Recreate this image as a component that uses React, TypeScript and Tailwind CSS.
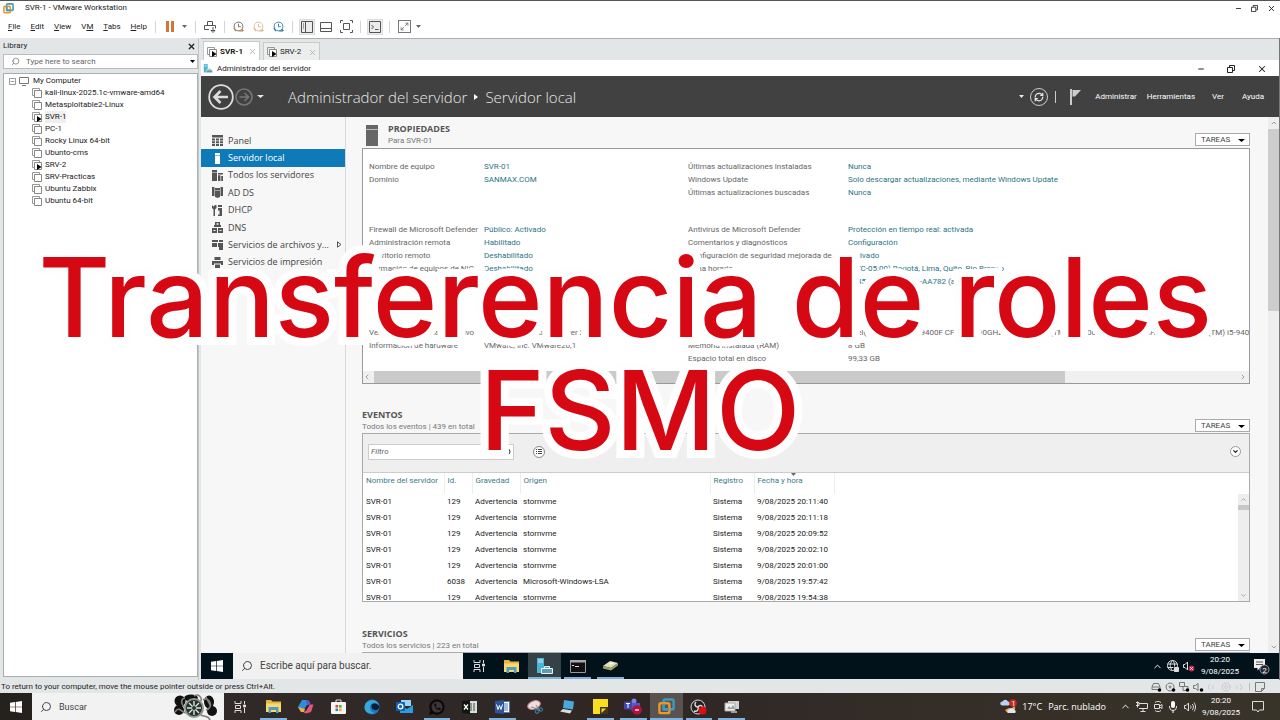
import React from "react";
import clsx from "clsx";
import { X, Minus, Search, ChevronUp, ChevronDown, ChevronLeft, ChevronRight, RefreshCw, Maximize2 } from "lucide-react";

const vms = [
  { name: "kali-linux-2025.1c-vmware-amd64" },
  { name: "Metasploitable2-Linux" },
  { name: "SVR-1", running: true, active: true },
  { name: "PC-1" },
  { name: "Rocky Linux 64-bit" },
  { name: "Ubunto-cms" },
  { name: "SRV-2", running: true },
  { name: "SRV-Practicas" },
  { name: "Ubuntu Zabbix" },
  { name: "Ubuntu 64-bit" },
];

const roles = [
  { name: "Panel", icon: "panel" },
  { name: "Servidor local", icon: "local", active: true },
  { name: "Todos los servidores", icon: "all" },
  { name: "AD DS", icon: "adds" },
  { name: "DHCP", icon: "dhcp" },
  { name: "DNS", icon: "dns" },
  { name: "Servicios de archivos y...", icon: "files", more: true },
  { name: "Servicios de impresión", icon: "print" },
];

const properties = [
  [
    ["Nombre de equipo", "SVR-01", "Últimas actualizaciones instaladas", "Nunca"],
    ["Dominio", "SANMAX.COM", "Windows Update", "Solo descargar actualizaciones, mediante Windows Update"],
    ["", "", "Últimas actualizaciones buscadas", "Nunca"],
  ],
  [
    ["Firewall de Microsoft Defender", "Público: Activado", "Antivirus de Microsoft Defender", "Protección en tiempo real: activada"],
    ["Administración remota", "Habilitado", "Comentarios y diagnósticos", "Configuración"],
    ["Escritorio remoto", "Deshabilitado", "Configuración de seguridad mejorada de", "Activado"],
    ["Formación de equipos de NIC", "Deshabilitado", "Zona horaria", "(UTC-05:00) Bogotá, Lima, Quito, Rio Branco"],
    ["", "", "", "00454-40000-00001-AA782 (activado)"],
  ],
];

const hardware = [
  [
    "Versión del sistema operativo",
    "Microsoft Windows Server 2022",
    "Procesadores",
    "Intel(R) Core(TM) i5-9400F CPU @ 2.90GHz, Intel(R) Core(TM) i5-9400F CPU @ 2.90GHz, Intel(R) Core(TM) i5-9400F",
  ],
  ["Información de hardware", "VMware, Inc. VMware20,1", "Memoria instalada (RAM)", "8 GB"],
  ["", "", "Espacio total en disco", "99,33 GB"],
];

const events = [
  ["SVR-01", "129", "Advertencia", "stornvme", "Sistema", "9/08/2025 20:11:40"],
  ["SVR-01", "129", "Advertencia", "stornvme", "Sistema", "9/08/2025 20:11:18"],
  ["SVR-01", "129", "Advertencia", "stornvme", "Sistema", "9/08/2025 20:09:52"],
  ["SVR-01", "129", "Advertencia", "stornvme", "Sistema", "9/08/2025 20:02:10"],
  ["SVR-01", "129", "Advertencia", "stornvme", "Sistema", "9/08/2025 20:01:00"],
  ["SVR-01", "6038", "Advertencia", "Microsoft-Windows-LSA", "Sistema", "9/08/2025 19:57:42"],
  ["SVR-01", "129", "Advertencia", "stornvme", "Sistema", "9/08/2025 19:54:38"],
];

export default function App() {
  return (
    <div className="relative flex h-screen flex-col overflow-hidden bg-[#e3e6e7] font-['Roboto',sans-serif] text-[8px] leading-3 text-[#222]">
      <TitleBar />
      <MenuBar />
      <div className="flex min-h-0 flex-1">
        <Library />
        <Console />
      </div>
      <StatusBar />
      <HostTaskbar />
      <Headline />
    </div>
  );
}

function Headline() {
  return (
    <h1 className="pointer-events-none absolute inset-x-0 top-[241px] text-center font-['Inter',sans-serif] text-[110px] leading-[113px] font-medium whitespace-pre text-[#d50813] [-webkit-text-stroke:16px_#fefefe] [paint-order:stroke_fill] [stroke-linejoin:round]">
      {"Transferencia de roles \nFSMO"}
    </h1>
  );
}

function TitleBar() {
  return (
    <header className="flex h-[15px] shrink-0 items-center border-t border-[#555] bg-white pr-1 pl-[3px]">
      <VmwareLogo className="size-[11px]" />
      <span className="ml-[11px] flex-1">SVR-1 - VMware Workstation</span>
      <WindowButtons gap="gap-[9px]" size={7} />
    </header>
  );
}

function WindowButtons({ gap, size }: { gap: string; size: number }) {
  return (
    <div className={clsx("flex items-center text-[#222]", gap)}>
      <button type="button" aria-label="Minimizar">
        <Minus size={size} strokeWidth={3} />
      </button>
      <button type="button" aria-label="Restaurar">
        <svg width={size} height={size} viewBox="0 0 8 8" fill="none" stroke="currentColor">
          <path d="M.5 2.500h5v5h-5zM2.500 2V.5h5v5H6" />
        </svg>
      </button>
      <button type="button" aria-label="Cerrar">
        <X size={size + 2} strokeWidth={2.500} />
      </button>
    </div>
  );
}

const Separator = () => <span className="h-3 w-px bg-[#d5d5d5]" />;

const Caret = ({ className }: { className?: string }) => (
  <svg className={clsx("h-[3px] w-[5px]", className)} viewBox="0 0 6 3" preserveAspectRatio="none" fill="currentColor">
    <path d="M0 0h6L3 3z" />
  </svg>
);

function MenuBar() {
  return (
    <nav className="flex h-[23px] shrink-0 items-center bg-white pl-2 text-[#222]">
      <div className="flex w-[147px] items-center justify-between pr-2">
        {["File", "Edit", "View"].map((m) => (
          <button key={m} type="button">
            <u>{m[0]}</u>
            {m.slice(1)}
          </button>
        ))}
        <button type="button">
          V<u>M</u>
        </button>
        {["Tabs", "Help"].map((m) => (
          <button key={m} type="button">
            <u>{m[0]}</u>
            {m.slice(1)}
          </button>
        ))}
      </div>
      <div className="flex items-center">
        <Separator />
        <button type="button" aria-label="Pause" className="ml-[10px] flex gap-[2px]">
          <span className="h-[11px] w-[3px] bg-[#cf7638]" />
          <span className="h-[11px] w-[3px] bg-[#cf7638]" />
        </button>
        <Caret className="mr-2 ml-2 text-[#666]" />
        <Separator />
        <button type="button" aria-label="Send Ctrl+Alt+Del" className="mr-2 ml-2">
          <svg width="12" height="12" viewBox="0 0 12 12" fill="none" stroke="#555">
            <path d="M3.500 4V.5h5V4M5 8.500H.5v-4h11v3M9 6v4M7 9.500h4L9 11.500z" />
          </svg>
        </button>
        <Separator />
        <div className="mr-2 ml-2 flex gap-[9px]">
          <ClockIcon color="#666" accent="#b98552" />
          <ClockIcon color="#e0b98f" accent="#e0b98f" />
          <ClockIcon color="#2c7fa0" accent="#2c7fa0" />
        </div>
        <Separator />
        <div className="mr-[7px] ml-[6px] flex items-center text-[#555]">
          <button type="button" aria-label="Library" className="border border-[#ddd] bg-[#ececec] p-px">
            <svg width="12" height="12" viewBox="0 0 12 12" fill="none" stroke="currentColor">
              <path d="M.5.5h11v11H.5zM4.500.5v11M2 3h1M2 5h1M2 7h1" />
            </svg>
          </button>
          <button type="button" aria-label="Thumbnail bar" className="mr-2 ml-[5px]">
            <svg width="12" height="12" viewBox="0 0 12 12" fill="none" stroke="currentColor">
              <path d="M.5 1.500h11v9H.5zM.5 7.500h11" />
            </svg>
          </button>
          <button type="button" aria-label="Full screen">
            <svg width="13" height="13" viewBox="0 0 13 13" fill="none" stroke="currentColor">
              <path d="M.5 3V.5H3M10 .5h2.500V3M12.500 10v2.500H10M3 12.500H.5V10M3.500 3.500h6v6h-6z" />
            </svg>
          </button>
        </div>
        <Separator />
        <button type="button" aria-label="Console" className="mr-[6px] ml-[6px] border border-[#ddd] bg-[#ececec] p-px text-[#555]">
          <svg width="12" height="12" viewBox="0 0 12 12" fill="none" stroke="currentColor">
            <path d="M.5.5h11v11H.5zM2.500 4l2 2-2 2M6 8.500h3.500" />
          </svg>
        </button>
        <Separator />
        <button type="button" aria-label="Stretch" className="ml-2 flex size-[13px] items-center justify-center border border-[#777] text-[#666]">
          <Maximize2 size={9} strokeWidth={2} />
        </button>
        <Caret className="ml-[5px] text-[#666]" />
      </div>
    </nav>
  );
}

const ClockIcon = ({ color, accent }: { color: string; accent: string }) => (
  <svg width="11" height="11" viewBox="0 0 12 12" fill="none">
    <circle cx="6" cy="6" r="4.800" stroke={color} />
    <path d="M6 3v3.200h2.500" stroke={color} />
    <path d="M1 7.500l2 3.500M7 10.800h4M9.500 9l2 1.800" stroke={accent} strokeWidth="1.300" />
  </svg>
);

function VmwareLogo({ className }: { className?: string }) {
  return (
    <svg className={className} viewBox="0 0 18 18" fill="none" strokeWidth="2.600">
      <rect x="6" y="1.500" width="10.500" height="10.500" rx="1.500" stroke="#3f9cb8" />
      <rect x="1.500" y="5.500" width="10.500" height="10.500" rx="1.500" stroke="#e8982d" />
      <path d="M6 6v6h6" stroke="#3f9cb8" />
    </svg>
  );
}

const VmIcon = ({ running }: { running?: boolean }) => (
  <svg width="10" height="10" viewBox="0 0 10 10" fill="none" className="shrink-0">
    <path d="M2.500 7.500h-2v-7h7v2" stroke="#999" />
    <path d="M2.500 2.500h7v7h-7z" fill="#fff" stroke="#888" />
    {running && <path d="M5 4v6l4.500-3z" fill="#000" />}
  </svg>
);

function Library() {
  return (
    <aside className="flex w-[199px] shrink-0 flex-col border-r border-[#c4c8c9] pl-[3px]">
      <div className="flex h-4 items-center justify-between pr-[2px]">
        <h2>Library</h2>
        <button type="button" aria-label="Close library">
          <X size={9} strokeWidth={3.500} />
        </button>
      </div>
      <label className="flex h-[15px] items-center border border-[#b9bdbf] bg-white pr-[2px] pl-[7px]">
        <Search size={9} strokeWidth={2} className="-scale-x-100 text-[#777]" />
        <input type="text" aria-label="Search" placeholder="Type here to search" className="ml-[6px] min-w-0 flex-1 outline-none placeholder:text-[#666]" />
        <Caret className="text-black" />
      </label>
      <div className="mt-1 mb-[3px] flex-1 border border-[#a9adaf] bg-white pt-px pl-[5px]">
        <div className="flex h-3 items-center">
          <svg width="7" height="7" viewBox="0 0 8 8" fill="none" stroke="#888">
            <path d="M.5.5h7v7h-7zM2 4h4" />
          </svg>
          <svg width="10" height="9" viewBox="0 0 10 9" fill="none" stroke="#777" className="mr-1 ml-[3px]">
            <path d="M.5.5h9v6h-9zM3 8.500h4" />
          </svg>
          My Computer
        </div>
        <ul className="pl-[23px]">
          {vms.map((vm) => (
            <li key={vm.name} className="flex h-3 items-center">
              <VmIcon running={vm.running} />
              <span className={clsx("ml-[3px]", vm.active && "bg-[#efefef]")}>{vm.name}</span>
            </li>
          ))}
        </ul>
      </div>
    </aside>
  );
}

function Console() {
  return (
    <section className="ml-[2px] flex min-w-0 flex-1 flex-col border-r border-[#777]">
      <div className="flex h-[22px] shrink-0 items-end gap-[3px] border-t border-[#a9adaf] pl-[2px]">
        <ConsoleTab name="SVR-1" active />
        <ConsoleTab name="SRV-2" />
      </div>
      <div className="flex h-4 shrink-0 items-center bg-white pt-px pr-[12px] pl-[2px]">
        <ServerManagerIcon className="h-[9px] w-[10px]" />
        <span className="ml-1 flex-1">Administrador del servidor</span>
        <WindowButtons gap="gap-[22px]" size={8} />
      </div>
      <ManagerHeader />
      <div className="flex min-h-0 flex-1 bg-[#f7f7f7]">
        <RoleList />
        <main className="flex min-w-0 flex-1 flex-col overflow-hidden pr-[18px] pl-4">
          <Properties />
          <Events />
          <Services />
        </main>
        <div className="flex w-[11px] shrink-0 flex-col items-center bg-[#eee] text-[#777]">
          <ChevronUp size={8} className="my-[2px]" />
          <div className="h-[182px] w-full bg-[#cdcdcd]" />
          <div className="flex-1" />
          <ChevronDown size={8} className="my-[2px]" />
        </div>
      </div>
      <GuestTaskbar />
      <div className="h-px shrink-0" />
    </section>
  );
}

function ConsoleTab({ name, active }: { name: string; active?: boolean }) {
  return (
    <div className={clsx("flex w-[57px] items-center border border-b-0 border-[#c8caca] pt-px pl-[3px]", active ? "h-[19px] bg-white font-bold" : "h-[18px] bg-[#eceded]")}>
      <VmIcon running />
      <span className="ml-[3px] flex-1">{name}</span>
      <button type="button" aria-label={`Close ${name}`} className="mr-[2px] text-[#aaa]">
        <X size={9} />
      </button>
    </div>
  );
}

const ServerManagerIcon = ({ className }: { className?: string }) => (
  <svg className={className} viewBox="0 0 17 16">
    <path d="M1 0h7v15H1z" fill="#4cb4d8" />
    <path d="M2 2h5M2 4h5" stroke="#c9ecf7" />
    <path d="M5.500 10.500h11v5h-11zM8.500 10.500v-2h5v2" fill="#5e9cb3" stroke="#e8f5fa" />
  </svg>
);

function ManagerHeader() {
  return (
    <div className="flex h-[41px] shrink-0 items-center bg-[#414141] pr-[15px] pl-[7px] text-[#e8e8e8]">
      <button type="button" aria-label="Atrás">
        <svg width="26" height="26" viewBox="0 0 26 26" fill="none" stroke="#ddd">
          <circle cx="13" cy="13" r="11.800" strokeWidth="1.800" />
          <path d="M20 13H7M12.500 7L6.500 13l6 6" strokeWidth="2.600" />
        </svg>
      </button>
      <button type="button" aria-label="Adelante">
        <svg width="20" height="20" viewBox="0 0 20 20" fill="none" stroke="#777" strokeWidth="1.600">
          <circle cx="10" cy="10" r="8" />
          <path d="M5.500 10h9M10.500 6l4 4-4 4" />
        </svg>
      </button>
      <Caret className="ml-[3px] h-1 w-[7px]" />
      <h1 className="ml-6 flex flex-1 items-center font-['Open_Sans',sans-serif] text-[15px] font-light">
        Administrador del servidor
        <svg width="4" height="6" viewBox="0 0 4 6" fill="#fff" className="mx-[7px]">
          <path d="M0 0v6l4-3z" />
        </svg>
        Servidor local
      </h1>
      <Caret />
      <button type="button" aria-label="Actualizar" className="ml-[6px] flex size-[18px] items-center justify-center rounded-full border border-[#ccc]">
        <RefreshCw size={10} strokeWidth={3} />
      </button>
      <span className="ml-[7px] h-3 w-px bg-[#ccc]" />
      <button type="button" aria-label="Notificaciones" className="ml-[14px]">
        <svg width="11" height="16" viewBox="0 0 11 16">
          <path d="M0 0h2v16H0zM2.500 1H11L5 7.500H2.500z" fill="#ccc" />
        </svg>
      </button>
      <nav className="ml-[14px] flex pt-px text-white">
        <button type="button">Administrar</button>
        <button type="button" className="ml-[10px]">Herramientas</button>
        <button type="button" className="ml-[17px]">Ver</button>
        <button type="button" className="ml-[18px]">Ayuda</button>
      </nav>
    </div>
  );
}

const roleShapes: Record<string, React.ReactNode> = {
  panel: <path d="M0 0h11v2.500H0zM0 3.500h3v2H0zM4 3.500h3v2H4zM8 3.500h3v2H8zM0 6.300h3v2H0zM4 6.300h3v2H4zM8 6.300h3v2H8zM0 9h3v2H0zM4 9h3v2H4zM8 9h3v2H8z" />,
  local: <path d="M3 0h5v2H3zM3 2.600h5V11H3z" />,
  all: <path d="M0 0h5v2H0zM0 2.600h5V11H0zM6 3h5v1.500H6zM6 5.200h2.500V11H6zM9.200 6H11v5H9.200z" />,
  adds: <path d="M0 0h2.500v9H0zM11 0H8.500v9H11zM3 1h5v2H3zM3 3.600h5V10l-2.500 1L3 10z" />,
  dhcp: <path d="M0 0l1.500 1.500L3 0h1.500v3L3 4.500V11H1.500V4.500L0 3zM6 0h4v2H6zM6 3h4v8H6V9.500h1.500v-4H6z" />,
  dns: <path d="M3 0h5v3h1v2H2V3h1zM0 6h5v5H0zM6 6h5v5H6zM4.500 1.200v1.600h2V1.200zM1.500 8v1h2V8zM7.500 8v1h2V8z" fillRule="evenodd" />,
  files: <path d="M0 1h6v2H0zM0 4h5v4H0zM7 1h4v2H7zM6 4h5v7H7V8H6z" />,
  print: <path d="M2.500 0h6v3h-6zM0 4h11v4H9V6.500H2V8H0zM3 7.500h5V11H3z" />,
};

function RoleList() {
  return (
    <div className="w-[145px] shrink-0 border-r border-[#d8d8d8] pt-[15px] font-['Open_Sans',sans-serif] text-[9px] text-[#444]">
      <ul className="flex h-[139px] flex-col">
        {roles.map((role) => (
          <li key={role.name} className="flex-1">
            <button type="button" className={clsx("flex h-full w-full items-center pl-[11px] text-left whitespace-nowrap", role.active && "bg-[#0e7ab8] text-white")}>
              <svg width="11" height="11" viewBox="0 0 11 11" fill={role.active ? "#fff" : "#555"} className="mr-[5px] shrink-0">
                {roleShapes[role.icon]}
              </svg>
              <span className="flex-1">{role.name}</span>
              {role.more && (
                <svg width="5" height="7" viewBox="0 0 5 7" fill="none" stroke="#555" className="mr-[3px]">
                  <path d="M.5.8v5.400l3.500-2.700z" />
                </svg>
              )}
            </button>
          </li>
        ))}
      </ul>
    </div>
  );
}

const Tasks = () => (
  <button type="button" className="flex h-[13px] w-[55px] items-center justify-between border border-[#aaa] bg-white pt-px pr-1 pl-[5px] text-[#444]">
    TAREAS
    <Caret className="h-1 w-[7px] text-black" />
  </button>
);

function PropertyRows({ rows, plain }: { rows: string[][]; plain?: boolean }) {
  return (
    <dl className="grid grid-cols-[115px_204px_160px_1fr] auto-rows-[13px] leading-[13px] whitespace-nowrap">
      {rows.flat().map((cell, i) =>
        i % 2 ? (
          <dd key={i} className={clsx("overflow-hidden", plain ? "text-[#666]" : "text-[#2b7485]")}>{cell}</dd>
        ) : (
          <dt key={i} className="text-[#666]">{cell}</dt>
        ),
      )}
    </dl>
  );
}

function Properties() {
  return (
    <section className="shrink-0">
      <div className="flex h-[31px] items-end pb-[2px]">
        <svg width="12" height="21" viewBox="0 0 12 21" className="mr-[10px] ml-1">
          <path d="M0 0h12v21H0z" fill="#666" />
          <path d="M0 4.500h12" stroke="#bbb" />
        </svg>
        <div className="flex-1">
          <h2 className="font-['Open_Sans',sans-serif] text-[9px] leading-3 font-bold text-[#555]">PROPIEDADES</h2>
          <p className="leading-[11px] text-[#777]">Para SVR-01</p>
        </div>
        <Tasks />
      </div>
      <div className="flex h-[236px] flex-col border border-[#999] bg-white">
        <div className="flex flex-1 flex-col pt-[11px] pl-[6px]">
          <PropertyRows rows={properties[0]} />
          <div className="h-6" />
          <PropertyRows rows={properties[1]} />
          <div className="h-[38px]" />
          <PropertyRows rows={hardware} plain />
        </div>
        <div className="flex h-3 items-center bg-[#f0f0f0] text-[#777]">
          <ChevronLeft size={8} className="mr-[3px]" />
          <div className="h-full w-[78%] bg-[#cacaca]" />
          <ChevronRight size={8} className="mr-[2px] ml-auto" />
        </div>
      </div>
    </section>
  );
}

function Events() {
  return (
    <section className="mt-6 shrink-0">
      <SectionTitle title="EVENTOS" detail="Todos los eventos | 439 en total" />
      <div className="flex h-[169px] flex-col overflow-hidden border border-[#aaa] bg-white">
        <div className="flex h-[39px] shrink-0 items-center border-b border-[#ccc] bg-[#efefef] pr-2 pb-[3px] pl-[5px]">
          <label className="flex h-4 w-[146px] items-center border border-[#ccc] bg-white pr-[2px] pl-[2px]">
            <input type="text" aria-label="Filtro" placeholder="Filtro" className="min-w-0 flex-1 outline-none placeholder:text-[#666] placeholder:italic" />
            <Search size={8} strokeWidth={3} className="-scale-x-100" />
          </label>
          <button type="button" aria-label="Vista" className="ml-[19px] flex size-[12px] items-center justify-center rounded-full border border-[#888] bg-white">
            <svg width="6" height="6" viewBox="0 0 6 6" stroke="#444">
              <path d="M0 .5h1M2 .5h4M0 2.500h1M2 2.500h4M0 4.500h1M2 4.500h4" />
            </svg>
          </button>
          <button type="button" aria-label="Expandir" className="ml-auto flex size-[11px] items-center justify-center rounded-full border border-[#999] bg-white">
            <ChevronDown size={7} strokeWidth={4} />
          </button>
        </div>
        <div className="flex min-h-0 flex-1">
          <table className="w-[471px] table-fixed self-start text-left whitespace-nowrap">
            <colgroup>
              <col className="w-[81px]" />
              <col className="w-[28px]" />
              <col className="w-[48px]" />
              <col className="w-[190px]" />
              <col className="w-[44px]" />
              <col className="w-[80px]" />
            </colgroup>
            <thead className="text-[#3b7c88]">
              <tr className="h-[21px] align-top">
                {["Nombre del servidor", "Id.", "Gravedad", "Origen", "Registro", "Fecha y hora"].map((h) => (
                  <th key={h} className="relative border-r border-[#eee] pt-[2px] pl-[3px] font-normal">
                    {h}
                    {h === "Fecha y hora" && <Caret className="absolute top-0 left-9 text-[#666]" />}
                  </th>
                ))}
              </tr>
            </thead>
            <tbody>
              {events.map((row) => (
                <tr key={row[5]} className="h-4">
                  {row.map((cell, i) => (
                    <td key={i} className="pl-[3px]">{cell}</td>
                  ))}
                </tr>
              ))}
            </tbody>
          </table>
          <div className="mt-[21px] ml-auto flex w-[11px] flex-col items-center bg-[#eee] text-[#777]">
            <ChevronUp size={7} className="my-[2px]" />
            <div className="h-[5px] w-full bg-[#c8c8c8]" />
            <div className="flex-1" />
            <ChevronDown size={7} className="my-[2px]" />
          </div>
        </div>
      </div>
    </section>
  );
}

const SectionTitle = ({ title, detail }: { title: string; detail: string }) => (
  <div className="flex h-[25px] items-end justify-between">
    <div>
      <h2 className="font-['Open_Sans',sans-serif] text-[9px] leading-3 font-bold text-[#555]">{title}</h2>
      <p className="text-[#777]">{detail}</p>
    </div>
    <div className="pb-px">
      <Tasks />
    </div>
  </div>
);

function Services() {
  return (
    <section className="mt-[25px] shrink-0">
      <SectionTitle title="SERVICIOS" detail="Todos los servicios | 223 en total" />
      <div className="h-5 border border-[#aaa] bg-[#efefef]" />
    </section>
  );
}

const WindowsLogo = () => (
  <svg width="12" height="12" viewBox="0 0 12 12" fill="#fff">
    <path d="M0 1.700l5-.7v4.700H0zM5.700.9L12 0v5.700H5.700zM0 6.300h5V11l-5-.7zM5.700 6.300H12V12l-6.300-.9z" />
  </svg>
);

const TaskViewIcon = () => (
  <svg width="12" height="12" viewBox="0 0 12 12" fill="none" stroke="#ddd">
    <path d="M1 0v2.500h6V0M1 12V9.500h6V12M1.500 4.500h5v3h-5zM10.500 0v3M10.500 7v5" />
    <path d="M9.500 4h2v2h-2z" fill="#ddd" />
  </svg>
);

const FolderIcon = () => (
  <svg width="15" height="13" viewBox="0 0 15 13">
    <path d="M0 0h5l1.500 1.500H15V12H0z" fill="#e5b53d" />
    <path d="M0 3.500h15V12H0z" fill="#f8d775" />
    <path d="M2.500 7h10v6H10v-3H5v3H2.500z" fill="#4c9fbd" />
  </svg>
);

type TaskProps = { label: string; open?: boolean; active?: boolean; width?: string; children: React.ReactNode };

const Task = ({ label, open, active, width = "w-[33px]", children }: TaskProps) => (
  <button type="button" aria-label={label} className={clsx("relative flex h-full items-center justify-center", width, active && "bg-white/20")}>
    {children}
    {open && <span className={clsx("absolute bottom-0 h-[2px] bg-[#7fb2dc]", active ? "inset-x-0" : "inset-x-[3px]")} />}
  </button>
);

function Clock() {
  return (
    <time className="w-10 text-center leading-3 text-white">
      20:20
      <br />
      9/08/2025
    </time>
  );
}

function GuestTaskbar() {
  return (
    <div className="flex h-[26px] shrink-0 items-center bg-[#02121a] text-white">
      <button type="button" aria-label="Inicio" className="flex w-8 justify-center">
        <WindowsLogo />
      </button>
      <label className="flex h-full w-[230px] items-center bg-[#f1f1f1] pl-2">
        <Search size={12} strokeWidth={2} className="-scale-x-100 text-[#444]" />
        <input type="text" aria-label="Buscar en el equipo" placeholder="Escribe aquí para buscar." className="ml-[7px] min-w-0 flex-1 text-[10px] outline-none placeholder:text-[#444]" />
      </label>
      <Task label="Vista de tareas" width="w-8">
        <TaskViewIcon />
      </Task>
      <Task label="Explorador">
        <FolderIcon />
      </Task>
      <Task label="Administrador del servidor" open active>
        <ServerManagerIcon className="h-4 w-[17px]" />
      </Task>
      <Task label="Símbolo del sistema" open>
        <svg width="16" height="13" viewBox="0 0 16 13">
          <path d="M.5.5h15v12H.5z" fill="#111" stroke="#999" />
          <path d="M0 0h16v2.500H0z" fill="#aaa" />
          <path d="M2 5.500h2M5 6.500h4" stroke="#ddd" />
        </svg>
      </Task>
      <Task label="Disco" open>
        <svg width="17" height="12" viewBox="0 0 17 12">
          <path d="M1 6L8 1l8 2-7 5z" fill="#dfe0b8" />
          <path d="M1 6l8 2 7-5v2.500l-7 5-8-2z" fill="#9b9d72" />
          <path d="M7 4l3-1.500 2 .5-3 1.500z" fill="#fff" />
        </svg>
      </Task>
      <div className="ml-auto flex items-center pr-[9px]">
        <ChevronUp size={11} />
        <svg width="12" height="12" viewBox="0 0 12 12" fill="none" stroke="#ddd" className="ml-1">
          <circle cx="5.500" cy="5.500" r="5" />
          <path d="M.5 4h10M.5 7.500h6M5.500.5c-3 3-3 7 0 10M5.500.5c2 2 2.500 4 2 6" />
          <path d="M7.500 7.500h4v4h-4z" fill="#ddd" />
        </svg>
        <svg width="12" height="11" viewBox="0 0 12 11" className="mr-[5px] ml-1">
          <path d="M.5 3.500H2L4.500 1v8L2 6.500H.5z" fill="none" stroke="#ddd" />
          <circle cx="8.500" cy="7.500" r="3" fill="#c2274b" />
          <path d="M7.300 6.300l2.400 2.400M9.700 6.300L7.300 8.700" stroke="#fff" />
        </svg>
        <Clock />
        <svg width="17" height="17" viewBox="0 0 17 17" className="ml-[13px]">
          <path d="M1 1h11v9H7l-2.500 2.500V10H1z" fill="#eee" />
          <path d="M3 4h7M3 6.500h7" stroke="#555" />
          <circle cx="11.500" cy="11.500" r="4.500" fill="#223" stroke="#999" />
          <text x="9.300" y="14.500" fontSize="8" fill="#fff">2</text>
        </svg>
      </div>
    </div>
  );
}

const Dot = () => <circle cx="8.500" cy="8" r="1.800" fill="#000" stroke="none" />;

function StatusBar() {
  return (
    <footer className="flex h-[13px] shrink-0 items-center justify-between pt-px pr-[15px] pl-px">
      <p>To return to your computer, move the mouse pointer outside or press Ctrl+Alt.</p>
      <div className="flex items-center gap-[3px]">
        {["M1 7.500V5l1.500-3.500h5L9 5v2.500zM1 5h8", "M5 1a4 4 0 1 0 .1 0M5 4a1 1 0 1 0 .1 0", "M.5.5h5v4h-5zM4 4.500h5v4H4z", "M.5 3.500h2L5 1.500v7l-2.500-2h-2z"].map((d) => (
          <svg key={d} width="11" height="10" viewBox="0 0 11 10" fill="none" stroke="#777">
            <path d={d} />
            <Dot />
          </svg>
        ))}
        {["M3 2L1 5l2 3M6 3v4", "M5 1a4 4 0 1 0 .1 0M5 3.500a1.500 1.500 0 1 0 .1 0", "M2 3v4M5 2l2 3-2 3"].map((d) => (
          <svg key={d} width="11" height="10" viewBox="0 0 11 10" fill="none" stroke="#c8cbcc">
            <path d={d} />
          </svg>
        ))}
        <span className="h-2 w-px bg-[#bbb]" />
        <svg width="10" height="10" viewBox="0 0 10 10" fill="none" stroke="#777" className="ml-[2px]">
          <path d="M.5.5h9v6l-3 3h-6zM6.500 9.500v-3h3" />
        </svg>
      </div>
    </footer>
  );
}

const FlowerIcon = () => (
  <svg width="46" height="26" viewBox="0 0 46 26">
    <g fill="#111">
      <circle cx="7" cy="7" r="5.500" />
      <circle cx="6" cy="16" r="5" />
      <ellipse cx="36" cy="8" rx="5" ry="6.500" />
      <circle cx="39" cy="17" r="5" />
      <ellipse cx="18" cy="4" rx="7" ry="3.500" />
    </g>
    <g fill="none" stroke="#807f79" strokeWidth="1.600">
      <path d="M2 18c5-8 8 4 12 0M12 4c-6 1-3 10 2 9M30 6c7-4 11 8 3 10M27 20c3 4 8 0 10 6M33 3l4 8M21 2c5-3 8 2 7 5" />
    </g>
    <circle cx="21" cy="14" r="9" fill="#29302d" stroke="#8e9690" strokeWidth="2" />
    <path d="M21 7v14M14 14h14M16 9l10 10M26 9L16 19" stroke="#d5e8dc" strokeWidth="1.400" />
    <circle cx="21" cy="14" r="2" fill="#29302d" />
  </svg>
);

function HostTaskbar() {
  return (
    <div className="flex h-[27px] shrink-0 items-center bg-linear-to-r from-[#302b29] via-[#302725] to-[#38342a] text-white">
      <button type="button" aria-label="Inicio" className="flex h-full w-8 items-center justify-center bg-[#25211c]">
        <WindowsLogo />
      </button>
      <label className="flex h-full w-48 items-center bg-[#f2f2f2] pl-2">
        <Search size={12} strokeWidth={2} className="-scale-x-100 text-[#444]" />
        <input type="text" aria-label="Buscar" placeholder="Buscar" className="ml-[7px] min-w-0 flex-1 text-[9px] outline-none placeholder:text-[#444]" />
        <span className="mr-[5px]">
          <FlowerIcon />
        </span>
      </label>
      <Task label="Vista de tareas" width="w-8">
        <TaskViewIcon />
      </Task>
      <div className="flex h-full w-[492px] pl-px">
        <Task label="Explorador" open width="flex-1">
          <FolderIcon />
        </Task>
        <Task label="Copilot" width="flex-1">
          <svg width="16" height="15" viewBox="0 0 16 15">
            <path d="M4 1h5l2 4-3 2-3 6H3L0 8z" fill="#2e8fd8" />
            <path d="M9 1c3 0 3 3 3.500 4.500L9 6 7.500 1z" fill="#5a57d6" />
            <path d="M12 5.500h3.500L13 13l-5 1.500L5 13l3-1z" fill="#e8557a" />
            <path d="M0 8l3 5h3l1-3z" fill="#e9b04b" />
          </svg>
        </Task>
        <Task label="Store" width="flex-1">
          <svg width="15" height="16" viewBox="0 0 15 16">
            <path d="M5 3V1h5v2" fill="none" stroke="#ddd" />
            <rect y="3" width="15" height="12" rx="1" fill="#f3f3f3" />
            <path d="M4.500 6h2.600v2.600H4.500z" fill="#d9482f" />
            <path d="M8 6h2.600v2.600H8z" fill="#69a53a" />
            <path d="M4.500 9.500h2.600v2.600H4.500z" fill="#2f83c9" />
            <path d="M8 9.500h2.600v2.600H8z" fill="#e8b23a" />
          </svg>
        </Task>
        <Task label="Edge" width="flex-1">
          <svg width="16" height="16" viewBox="0 0 16 16">
            <circle cx="8" cy="8" r="7.500" fill="#1c78c2" />
            <path d="M1 6C3 0 14-1 15.500 7c-1-3-6-5-9-1C5 9 7 14 11 14 4 16-1 12 1 6z" fill="#3ba6d8" />
            <path d="M7.500 7c0-4 7-3 8 1-.5 3-4 4-6 2.500C8 10 7.500 8 7.500 7z" fill="#0d1e38" />
          </svg>
        </Task>
        <Task label="Outlook" width="flex-1">
          <svg width="17" height="15" viewBox="0 0 17 15">
            <path d="M5 1h10v6H5z" fill="#9bd3f2" />
            <path d="M4 6l7 4 6-4v8H4z" fill="#2f9be0" />
            <rect y="3" width="9" height="9" rx="1" fill="#0f63b0" />
            <circle cx="4.500" cy="7.500" r="2.300" fill="none" stroke="#fff" strokeWidth="1.300" />
          </svg>
        </Task>
        <Task label="WhatsApp" open width="flex-1">
          <svg width="16" height="16" viewBox="0 0 16 16">
            <path d="M0 16l1.200-4.200a7.700 7.700 0 1 1 3 3z" fill="#0a0a0a" />
            <circle cx="8" cy="8" r="5.500" fill="#3b3533" />
            <path d="M5.500 4.500c-1 3 2.500 7 6 6.500l.5-1.500-2-1-1 1c-1.500-.7-2-1.500-2.300-2.500l.8-1-.8-1.500z" fill="#0a0a0a" />
          </svg>
        </Task>
        <Task label="Excel" width="flex-1">
          <svg width="15" height="14" viewBox="0 0 15 14">
            <path d="M7 1h8v12H7z" fill="#d8ded8" />
            <path d="M9 3v8M12 3v8" stroke="#444" />
            <path d="M0 1l8-1v14l-8-1z" fill="#101612" />
            <path d="M2 4.500l4 5M6 4.500l-4 5" stroke="#fff" strokeWidth="1.300" />
          </svg>
        </Task>
        <Task label="Word" open width="flex-1">
          <svg width="15" height="14" viewBox="0 0 15 14">
            <path d="M7 1.500h7.500v11H7z" fill="#fff" stroke="#4a78bd" />
            <path d="M9 4h4M9 6h4M9 8h4M9 10h4" stroke="#4a78bd" />
            <path d="M0 1l9-1v14l-9-1z" fill="#2b579a" />
            <path d="M1.500 4.500l1.500 5 1.500-4 1.500 4 1.500-5" fill="none" stroke="#fff" />
          </svg>
        </Task>
        <Task label="Recortes" width="flex-1">
          <svg width="16" height="14" viewBox="0 0 16 14" fill="none">
            <ellipse cx="7" cy="5" rx="6.500" ry="4" fill="#eadfe0" stroke="#c9868d" transform="rotate(-20 7 5)" />
            <path d="M4 7l7 2M9 5l4 6" stroke="#888" />
            <circle cx="10" cy="11.500" r="1.800" stroke="#3e8fc4" />
            <circle cx="13.800" cy="9.500" r="1.700" stroke="#3e8fc4" />
          </svg>
        </Task>
        <Task label="Equipo" width="flex-1">
          <svg width="17" height="14" viewBox="0 0 17 14">
            <path d="M5 0l10 1.500-1 8L4 8z" fill="#4aa8dc" />
            <path d="M4 9l9 1.500-2 3-10-2z" fill="#d5dde0" />
          </svg>
        </Task>
        <Task label="Notas" open width="flex-1">
          <svg width="15" height="15" viewBox="0 0 15 15">
            <path d="M0 0h15v15H0z" fill="#f7df1e" />
            <path d="M7 15V8h8v7z" fill="#40391c" />
            <path d="M8.500 14V9.500H13z" fill="#f1d93a" />
          </svg>
        </Task>
        <Task label="Teams" open width="flex-1">
          <svg width="18" height="17" viewBox="0 0 18 17">
            <circle cx="10" cy="3" r="2.500" fill="#7b83eb" />
            <path d="M6 5h10v6c0 3-8 5-9 0z" fill="#5059c9" />
            <rect y="3.500" width="8" height="8" rx="1" fill="#4048a8" />
            <path d="M2 5.500h4M4 5.500v4.500" stroke="#fff" />
            <circle cx="13" cy="12" r="4.800" fill="#b3123f" />
            <path d="M11 12h4" stroke="#fff" strokeWidth="1.300" />
          </svg>
        </Task>
        <Task label="VMware" open active width="flex-1">
          <VmwareLogo className="size-[17px]" />
        </Task>
        <Task label="OBS" open width="flex-1">
          <svg width="17" height="16" viewBox="0 0 17 16">
            <circle cx="8" cy="8" r="7" fill="#222" stroke="#ddd" />
            <path d="M8 8c-3 0-4-3-2-5M8 8c2-3 5-1 5 1M8 8c1 3-1 5-4 4" stroke="#ddd" strokeWidth="1.500" fill="none" />
            <circle cx="12.500" cy="11.500" r="4" fill="#d81010" />
          </svg>
        </Task>
        <Task label="Fotos" open width="flex-1">
          <svg width="16" height="14" viewBox="0 0 16 14">
            <path d="M4 1h11v8H4z" fill="#cfd2d3" />
            <path d="M1 3h10v8H1z" fill="#eee" stroke="#aaa" />
            <path d="M3 9l2-3 2 2 2-3 2 4zM7 11h6v2H7z" fill="#9aa0a2" />
          </svg>
        </Task>
      </div>
      <div className="ml-auto flex items-center pr-4">
        <svg width="18" height="15" viewBox="0 0 18 15">
          <path d="M9 9c3 1 5-1 5-3 3 3 0 8-4 8-3 0-4-2-5-3z" fill="#f2a33c" />
          <path d="M2 6.500a2 2 0 0 1 .5-4 3 3 0 0 1 5.500 0 2 2 0 0 1 0 4z" fill="#b9d4f3" />
          <path d="M8 14a2 2 0 0 1 1-3.500 3 3 0 0 1 5 0 2 2 0 0 1 1 3.500z" fill="#dbe7f7" />
          <circle cx="13" cy="4" r="3.800" fill="#c4291f" />
          <text x="11.500" y="6.500" fontSize="7" fill="#fff">1</text>
        </svg>
        <span className="ml-1 font-['Open_Sans',sans-serif] text-[9px]">17°C</span>
        <span className="ml-[6px] font-['Open_Sans',sans-serif] text-[9px]">Parc. nublado</span>
        <ChevronUp size={11} className="ml-[14px]" />
        <svg width="12" height="11" viewBox="0 0 12 11" fill="none" stroke="#ddd" className="ml-[5px]">
          <path d="M3 2.500h8.500v5H3M1.500.5v6M0 1.500h3v3H0M7 8v2M4.500 10.500h5" />
        </svg>
        <svg width="10" height="11" viewBox="0 0 10 11" fill="none" stroke="#ddd" className="ml-[5px]">
          <path d="M2 1.500C4 0 6 0 8 1.500M2 9.500c2 1.500 4 1.500 6 0M1.500 3.500h5v4h-5zM6.500 5l2.500-1.500v4L6.500 6" />
        </svg>
        <svg width="8" height="12" viewBox="0 0 8 12" fill="#fff" className="ml-[6px]">
          <rect x="2" width="4" height="7" rx="2" />
          <path d="M.5 5v1a3.500 3.500 0 0 0 7 0V5" fill="none" stroke="#ddd" />
          <path d="M3.500 9h1v3h-1z" />
        </svg>
        <svg width="12" height="10" viewBox="0 0 12 10" fill="none" stroke="#ddd" className="mr-[5px] ml-[7px]">
          <path d="M.5 3.500H2L4.500 1v8L2 6.500H.5zM6.500 3.500c.7 1 .7 2 0 3M8.300 2c1.500 2 1.500 4 0 6M10 .5c2 3 2 6 0 9" />
        </svg>
        <Clock />
        <svg width="12" height="12" viewBox="0 0 12 12" fill="none" stroke="#ddd" className="ml-[11px]">
          <path d="M.5.5h11v8.500H7.500L6 11 4.500 9h-4z" />
        </svg>
      </div>
    </div>
  );
}
